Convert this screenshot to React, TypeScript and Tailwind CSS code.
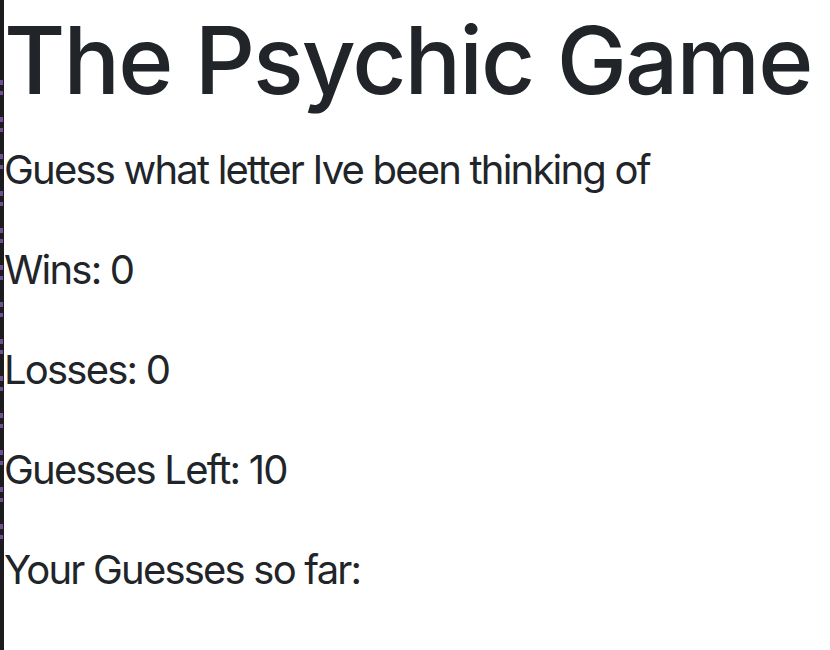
export default function App() {
  const marks = Array.from({ length: 13 });
  return (
    <div className="flex min-h-[650px] bg-white font-['Inter',sans-serif] text-[#212529]">
      <div className="flex w-[4px] shrink-0 flex-col gap-[22px] bg-[#1c1c1e] pt-[80px]">
        {marks.map((_, i) => (
          <div key={i} className="flex flex-col gap-[6px]">
            <span className="block h-[5px] w-[3px] bg-[#6f4f93]" />
            <span className="block h-[4px] w-[3px] bg-[#6f4f93]" />
          </div>
        ))}
      </div>
      <div className="flex flex-col">
        <h1 className="mb-[20px] whitespace-nowrap text-[94px] font-medium leading-[120px] tracking-[-0.02em]">
          The Psychic Game
        </h1>
        <p className="mb-[40px] text-[40px] leading-[60px] tracking-[-0.045em]">Guess what letter Ive been thinking of</p>
        <p className="mb-[40px] text-[40px] leading-[60px] tracking-[-0.045em]">Wins: 0</p>
        <p className="mb-[40px] text-[40px] leading-[60px] tracking-[-0.045em]">Losses: 0</p>
        <p className="mb-[40px] text-[40px] leading-[60px] tracking-[-0.045em]">Guesses Left: 10</p>
        <p className="mb-[40px] text-[40px] leading-[60px] tracking-[-0.045em]">Your Guesses so far:</p>
      </div>
    </div>
  );
}
